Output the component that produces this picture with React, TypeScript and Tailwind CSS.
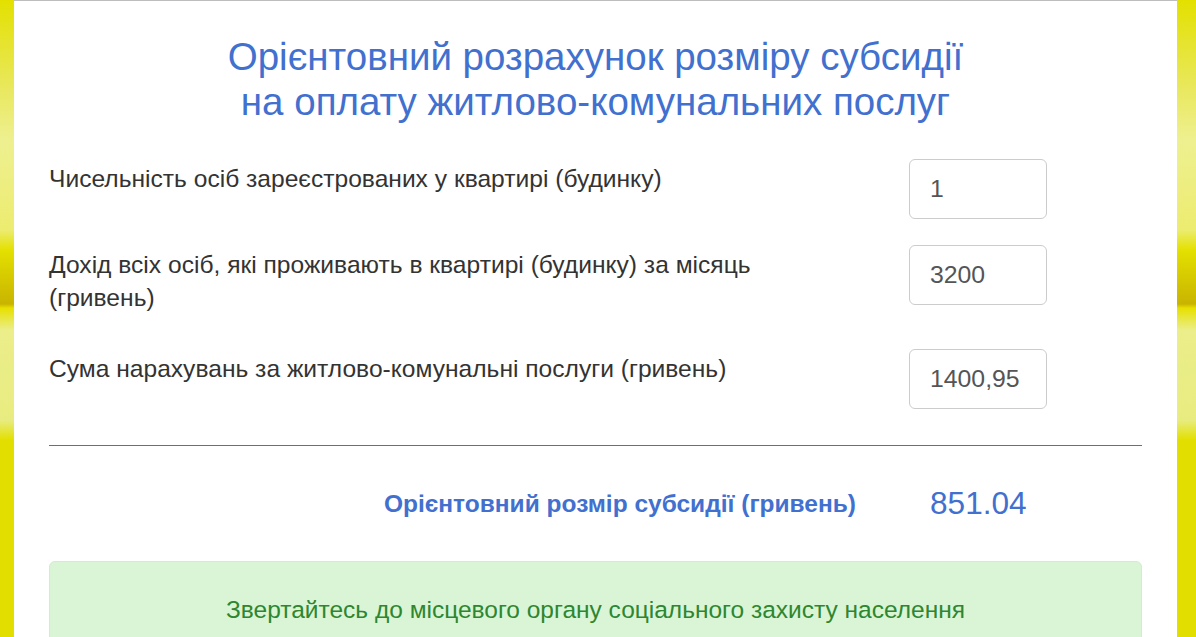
const rows = [
  { label: "Чисельність осіб зареєстрованих у квартирі (будинку)", value: "1", mt: "mt-[35px]" },
  { label: "Дохід всіх осіб, які проживають в квартирі (будинку) за місяць (гривень)", value: "3200", mt: "mt-[26px]" },
  { label: "Сума нарахувань за житлово-комунальні послуги (гривень)", value: "1400,95", mt: "mt-[35px]" },
];

export default function App() {
  return (
    <div className="flex h-[637px] w-[1196px] overflow-hidden bg-[linear-gradient(180deg,#e3e000_0px,#e9e860_90px,#eef090_140px,#ecec70_230px,#e4e000_250px,#c9b400_304px,#e6e000_308px,#ebee8a_330px,#e8ec80_420px,#e2df00_440px,#e2df00_637px)] font-['Liberation_Sans',Arial,sans-serif]">
      <div className="ml-[14px] w-[1163px] border-t border-[#bdbdbd] bg-white px-[35px] pt-[33px]">
        <h1 className="text-center text-[38.5px] leading-[45px] text-[#4170cf]">
          Орієнтовний розрахунок розміру субсидії
          <br />
          на оплату житлово-комунальних послуг
        </h1>

        {rows.map((r) => (
          <div key={r.value} className={`flex items-start ${r.mt}`}>
            <div className="w-[720px] pt-[3px] text-[24.6px] leading-[33px] text-[#333]">{r.label}</div>
            <div className="ml-[140px] flex h-[60px] w-[138px] items-center rounded-[6px] border border-[#cccccc] px-[20px] text-[24.8px] text-[#555]">
              {r.value}
            </div>
          </div>
        ))}

        <div className="mt-[36px] h-px bg-[#5470b0]" />

        <div className="mt-[35px] flex h-[46px] items-center">
          <div className="w-[807px] text-right text-[24.5px] font-bold text-[#4170cf]">
            Орієнтовний розмір субсидії (гривень)
          </div>
          <div className="ml-[74px] text-[31.6px] text-[#4170cf]">851.04</div>
        </div>

        <div className="mt-[34px] h-[120px] rounded-[6px] border border-[#d0eec8] bg-[#d9f5d6] pt-[30px] text-center text-[24.5px] leading-[36px] text-[#2e8630]">
          Звертайтесь до місцевого органу соціального захисту населення
        </div>
      </div>
    </div>
  );
}
